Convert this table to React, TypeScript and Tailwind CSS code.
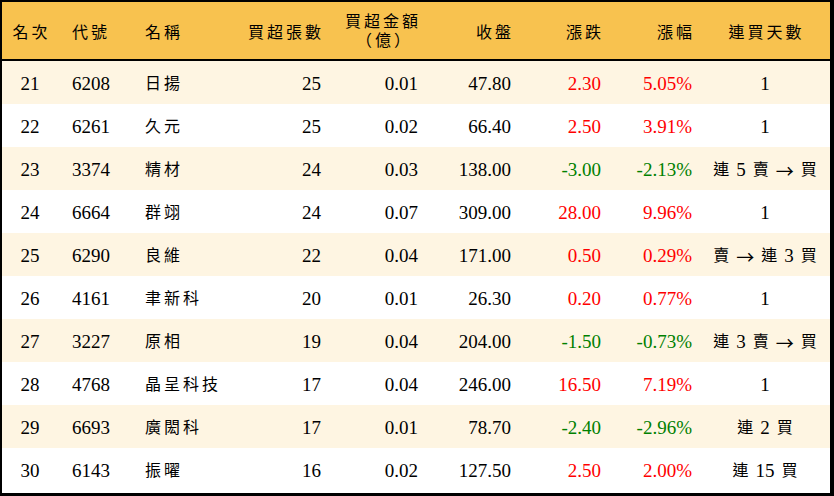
const rows = [
  { rank: 21, code: '6208', name: '日揚', vol: '25', amt: '0.01', close: '47.80', chg: '2.30', pct: '5.05%', days: '1' },
  { rank: 22, code: '6261', name: '久元', vol: '25', amt: '0.02', close: '66.40', chg: '2.50', pct: '3.91%', days: '1' },
  { rank: 23, code: '3374', name: '精材', vol: '24', amt: '0.03', close: '138.00', chg: '-3.00', pct: '-2.13%', days: '連 5 賣 → 買' },
  { rank: 24, code: '6664', name: '群翊', vol: '24', amt: '0.07', close: '309.00', chg: '28.00', pct: '9.96%', days: '1' },
  { rank: 25, code: '6290', name: '良維', vol: '22', amt: '0.04', close: '171.00', chg: '0.50', pct: '0.29%', days: '賣 → 連 3 買' },
  { rank: 26, code: '4161', name: '聿新科', vol: '20', amt: '0.01', close: '26.30', chg: '0.20', pct: '0.77%', days: '1' },
  { rank: 27, code: '3227', name: '原相', vol: '19', amt: '0.04', close: '204.00', chg: '-1.50', pct: '-0.73%', days: '連 3 賣 → 買' },
  { rank: 28, code: '4768', name: '晶呈科技', vol: '17', amt: '0.04', close: '246.00', chg: '16.50', pct: '7.19%', days: '1' },
  { rank: 29, code: '6693', name: '廣閎科', vol: '17', amt: '0.01', close: '78.70', chg: '-2.40', pct: '-2.96%', days: '連 2 買' },
  { rank: 30, code: '6143', name: '振曜', vol: '16', amt: '0.02', close: '127.50', chg: '2.50', pct: '2.00%', days: '連 15 買' },
];

const font = { fontFamily: '"Liberation Serif", "Noto Sans CJK TC", serif' };

// splits "連 5 賣 → 買" into tokens so digits/arrow can be sized apart from the CJK chars
function Streak({ text }: { text: string }) {
  return (
    <div className="flex items-center justify-center gap-[7px]">
      {text.split(' ').map((t, i) => {
        if (t === '→')
          return (
            <span key={i} className="text-[18px]" style={{ fontFamily: '"Noto Sans CJK TC", sans-serif' }}>
              →
            </span>
          );
        return (
          <span key={i} className={/^\d+$/.test(t) ? 'text-[19px]' : 'text-[16px]'}>
            {t}
          </span>
        );
      })}
    </div>
  );
}

function Th({ children }: { children: React.ReactNode }) {
  // trailing tracking pushes right-aligned ink left, pull it back
  return <span className="mr-[-3px]">{children}</span>;
}

export default function App() {
  return (
    <div className="h-[496px] w-[834px] bg-white text-black" style={font}>
      <div className="flex h-full flex-col border-t-2 border-r-4 border-b-[3px] border-l-2 border-black">
        {/* Header */}
        <div className="flex h-[59px] shrink-0 items-center border-b-2 border-black bg-[#f8c24f] pt-[4px] text-[16px] tracking-[3px]">
          <div className="w-[56px] pl-[3px] text-center">名次</div>
          <div className="w-[82px] pl-[14px]">代號</div>
          <div className="w-[95px] pl-[5px]">名稱</div>
          <div className="w-[86px] text-right"><Th>買超張數</Th></div>
          <div className="flex w-[97px] flex-col items-end pb-[4px] leading-[19px]">
            <Th>買超金額</Th>
            <span className="pr-[5px]">（億）</span>
          </div>
          <div className="w-[93px] text-right"><Th>收盤</Th></div>
          <div className="w-[90px] text-right"><Th>漲跌</Th></div>
          <div className="w-[91px] text-right"><Th>漲幅</Th></div>
          <div className="w-[136px] pl-[13px] text-center">連買天數</div>
        </div>

        {/* Rows */}
        {rows.map((r, i) => {
          const up = !r.chg.startsWith('-');
          const color = up ? 'text-[#ff0000]' : 'text-[#008000]';
          return (
            <div
              key={r.rank}
              className={`flex h-[43px] items-center pt-[3px] text-[19px] ${i % 2 === 0 ? 'bg-[#fef5e2]' : 'bg-white'}`}
            >
              <div className="w-[56px] text-center">{r.rank}</div>
              <div className="w-[82px] pl-[14px]">{r.code}</div>
              <div className="w-[95px] pl-[5px] text-[16px] tracking-[3px]">{r.name}</div>
              <div className="w-[86px] text-right">{r.vol}</div>
              <div className="w-[97px] text-right">{r.amt}</div>
              <div className="w-[93px] text-right">{r.close}</div>
              <div className={`w-[90px] text-right ${color}`}>{r.chg}</div>
              <div className={`w-[91px] text-right ${color}`}>{r.pct}</div>
              <div className="w-[136px] pl-[10px]">
                <Streak text={r.days} />
              </div>
            </div>
          );
        })}
      </div>
    </div>
  );
}
